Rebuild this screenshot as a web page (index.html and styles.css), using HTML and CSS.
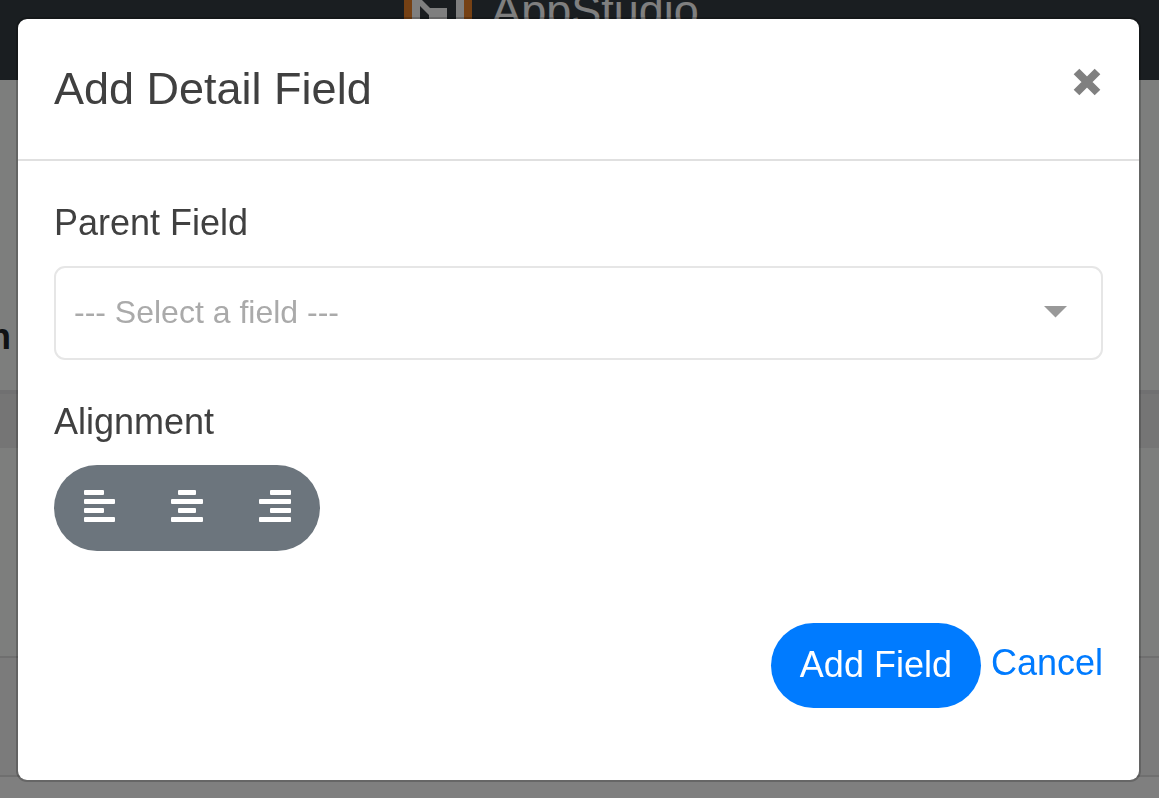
FILE: index.html
```html
<!DOCTYPE html>
<html lang="en">
<head>
<meta charset="utf-8">
<meta name="viewport" content="width=device-width, initial-scale=1">
<title>AppStudio</title>
<link rel="stylesheet" href="styles.css">
</head>
<body>
<div class="page" aria-hidden="true">
  <header class="topbar">
    <svg class="logo" width="68" height="44" viewBox="0 0 68 44">
      <path fill="#ec8228" d="M0 0h68v44H0z"/>
      <path fill="#fff" d="M8 0h52v44H8z"/>
      <path fill="#343a40" d="M17 19l9 9h17v16h9V16H17zM16 26l9 9v9h-9z"/>
    </svg>
    <span class="brand">AppStudio</span>
  </header>
  <div class="band band-title"><span class="column-name">n</span></div>
  <div class="band band-head"></div>
  <div class="band band-row"></div>
  <div class="band band-foot"></div>
</div>

<div class="backdrop">
  <div class="modal" role="dialog" aria-modal="true" aria-labelledby="modal-title">
    <div class="modal-header">
      <h1 class="modal-title" id="modal-title">Add Detail Field</h1>
      <button class="close" type="button" aria-label="Close">
        <svg width="28" height="28" viewBox="0 0 28 28"><path d="M3.500 3.500l21 21M24.500 3.500l-21 21" fill="none" stroke="#808080" stroke-width="8"/></svg>
      </button>
    </div>
    <form class="modal-body">
      <div class="field">
        <label class="label" for="parent">Parent Field</label>
        <div class="select-wrap">
          <select class="select" id="parent">
            <option>--- Select a field ---</option>
          </select>
          <svg class="caret" width="24" height="12" viewBox="0 0 24 12"><path fill="#999" d="M0 0h23L11.500 11.500z"/></svg>
        </div>
      </div>
      <div class="field">
        <span class="label" id="align-label">Alignment</span>
        <div class="group" role="group" aria-labelledby="align-label">
          <button class="align" type="button" aria-label="Left">
            <svg width="32" height="32" viewBox="0 0 32 32" fill="#fff"><rect x="1" width="20" height="5" rx="1"/><rect x="1" y="9" width="31" height="5" rx="1"/><rect x="1" y="18" width="20" height="5" rx="1"/><rect x="1" y="27" width="31" height="5" rx="1"/></svg>
          </button>
          <button class="align" type="button" aria-label="Center">
            <svg width="32" height="32" viewBox="0 0 32 32" fill="#fff"><rect x="7" width="18" height="5" rx="1"/><rect y="9" width="32" height="5" rx="1"/><rect x="7" y="18" width="18" height="5" rx="1"/><rect y="27" width="32" height="5" rx="1"/></svg>
          </button>
          <button class="align" type="button" aria-label="Right">
            <svg width="32" height="32" viewBox="0 0 32 32" fill="#fff"><rect x="11" width="21" height="5" rx="1"/><rect y="9" width="32" height="5" rx="1"/><rect x="11" y="18" width="21" height="5" rx="1"/><rect y="27" width="32" height="5" rx="1"/></svg>
          </button>
        </div>
      </div>
      <div class="actions">
        <button class="submit" type="submit">Add Field</button>
        <a class="cancel" href="#">Cancel</a>
      </div>
    </form>
  </div>
</div>
</body>
</html>
```

FILE: styles.css
```css
* {
  box-sizing: border-box;
}

body {
  margin: 0;
  font-family: "Liberation Sans", Arial, sans-serif;
  font-size: 36px;
  line-height: 54px;
  color: #404040;
  background: #fff;
}

.page {
  height: 100vh;
  overflow: hidden;
}

.topbar {
  display: flex;
  justify-content: center;
  gap: 19px;
  height: 100px;
  margin-top: -20px;
  padding-right: 56px;
  background: #353d42;
}

.brand {
  font-size: 45px;
  line-height: 62px;
  color: #fff;
}

.band-title {
  display: flex;
  align-items: flex-end;
  height: 310px;
  padding-bottom: 26px;
  background: #fafdfb;
}

.column-name {
  margin-left: -11px;
  font-weight: bold;
  color: #212529;
}

.band-head {
  height: 58px;
  border-top: 4px solid #e0e1e3;
  background: #ebebeb;
}

.band-row {
  height: 208px;
  background: #fafdfb;
}

.band-foot {
  height: 121px;
  border-top: 2px solid #dfdfdf;
  border-bottom: 2px solid #dfdfdf;
  background: #f7f7f7;
}

.backdrop {
  position: fixed;
  inset: 0;
  padding: 17px 18px 16px 16px;
  overflow: hidden;
  background: rgba(0, 0, 0, 0.5);
}

.modal {
  border: 2px solid rgba(0, 0, 0, 0.2);
  border-radius: 11px;
  background: #fff;
  background-clip: padding-box;
}

.modal-header {
  display: flex;
  align-items: flex-start;
  justify-content: space-between;
  padding: 36px;
  border-bottom: 2px solid #e0e0e0;
}

.modal-title {
  margin: 0;
  font-size: 45px;
  font-weight: normal;
  line-height: 68px;
}

.close {
  display: flex;
  padding: 13px 2px;
  border: 0;
  background: none;
}

.modal-body {
  padding: 36px 36px 72px;
}

.field {
  margin-bottom: 36px;
}

.label {
  display: block;
  margin-bottom: 17px;
  line-height: 52px;
}

.select-wrap {
  position: relative;
}

.select {
  display: block;
  appearance: none;
  width: 100%;
  height: 94px;
  padding: 0 72px 2px 18px;
  border: 2px solid #e6e6e6;
  border-radius: 11px;
  background: #fff;
  font: inherit;
  font-size: 32px;
  color: #aaa;
}

.caret {
  position: absolute;
  top: 40px;
  right: 35px;
  pointer-events: none;
}

.group {
  display: inline-flex;
  vertical-align: top;
  padding: 0 1px;
  border-radius: 43px;
  background: #6c757d;
}

.align {
  display: flex;
  padding: 25px 28px 29px;
  border: 0;
  background: none;
}

.actions {
  display: flex;
  justify-content: flex-end;
  align-items: center;
  gap: 10px;
  padding-top: 36px;
}

.submit {
  padding: 15px 29px 16px;
  border: 0;
  border-radius: 43px;
  background: #007bff;
  font: inherit;
  color: #fff;
}

.cancel {
  padding-bottom: 5px;
  color: #007bff;
  text-decoration: none;
}
```
